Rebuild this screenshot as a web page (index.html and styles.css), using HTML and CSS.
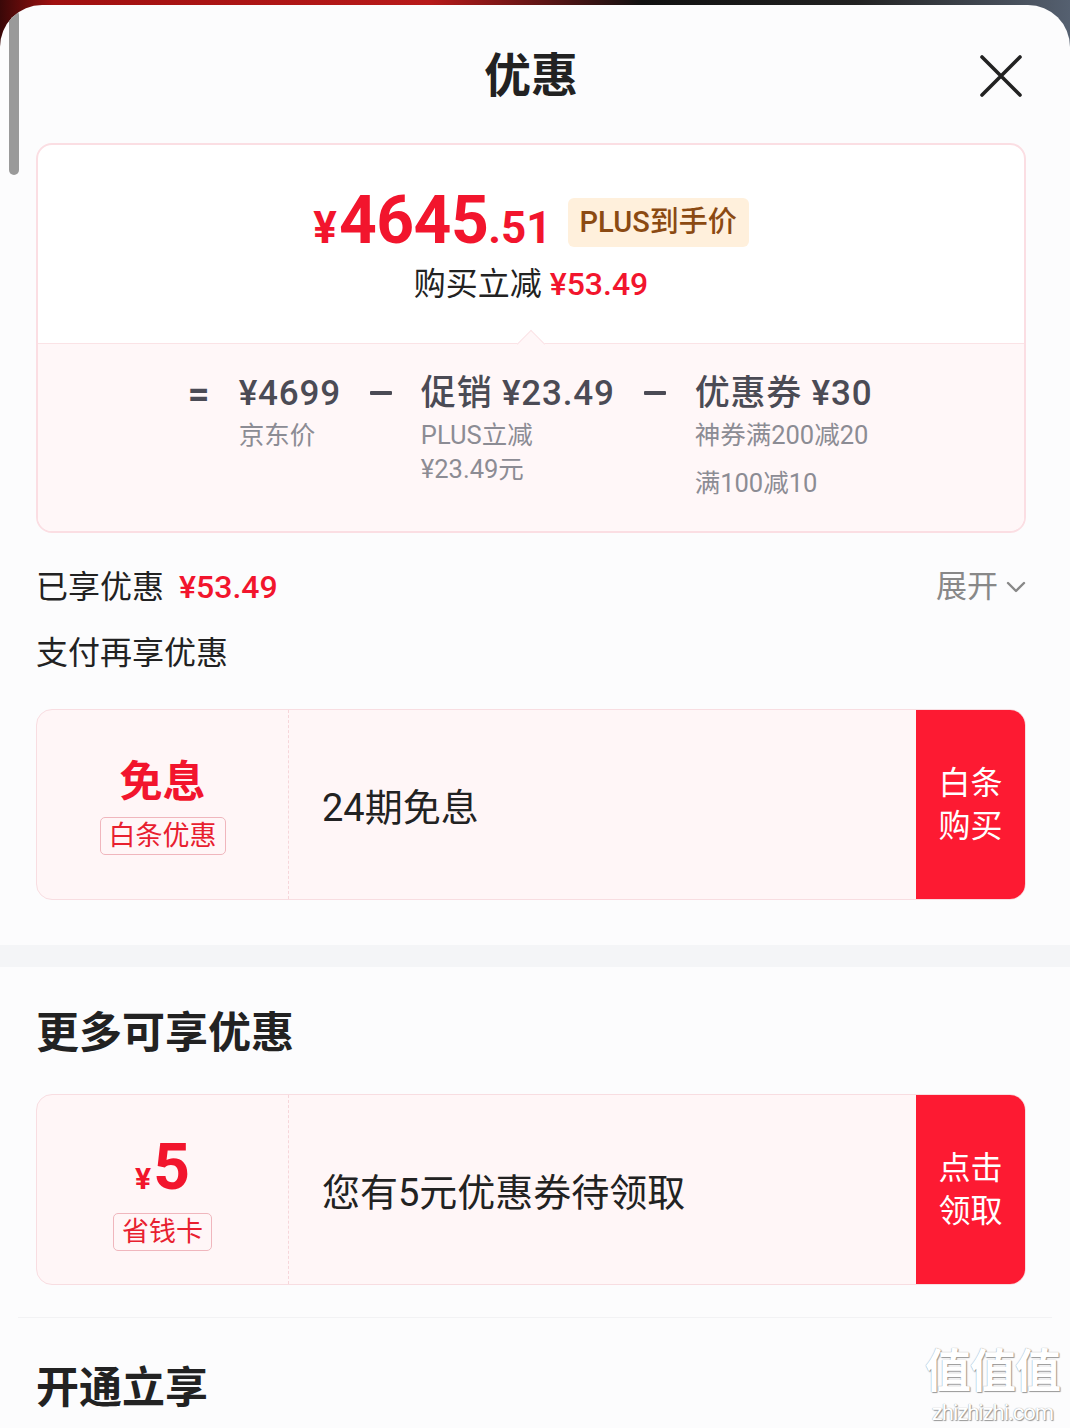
FILE: index.html
```html
<!DOCTYPE html>
<html lang="zh">
<head>
<meta charset="utf-8">
<link rel="stylesheet" href="styles.css">
</head>
<body>
<div class="sheet">
  <div class="scrollbar"></div>
  <div class="inner">
    <header class="head">
      <span></span>
      <h1 class="title">优惠</h1>
      <svg class="close" width="44" height="44" viewBox="0 0 44 44"><path d="M3 3 L41 41 M41 3 L3 41" stroke="#222" stroke-width="3.6" stroke-linecap="round" fill="none"/></svg>
    </header>

    <section class="price-card">
      <div class="pc-top">
        <div class="price-row">
          <span class="price"><span class="yen">¥</span><span class="int">4645</span><span class="dec">.51</span></span>
          <span class="plus-tag">PLUS到手价</span>
        </div>
        <div class="save-row">购买立减 <span class="red">¥53.49</span></div>
      </div>
      <div class="pc-bottom">
        <span class="notch"></span>
        <div class="formula">
          <span class="op">=</span>
          <div class="col">
            <div class="main">¥4699</div>
            <div class="sub sub-first">京东价</div>
          </div>
          <span class="minus"></span>
          <div class="col">
            <div class="main">促销 ¥23.49</div>
            <div class="sub sub-first">PLUS立减</div>
            <div class="sub">¥23.49元</div>
          </div>
          <span class="minus"></span>
          <div class="col">
            <div class="main">优惠券 ¥30</div>
            <div class="sub sub-first">神券满200减20</div>
            <div class="sub sub-gap">满100减10</div>
          </div>
        </div>
      </div>
    </section>

    <div class="enjoyed">
      <span>已享优惠<span class="red enjoyed-amt">¥53.49</span></span>
      <span class="expand">展开 <svg width="20" height="12" viewBox="0 0 20 12"><path d="M2 2 L10 10 L18 2" stroke="#888" stroke-width="2.4" fill="none" stroke-linecap="round" stroke-linejoin="round"/></svg></span>
    </div>
    <div class="pay-title">支付再享优惠</div>

    <div class="coupon">
      <div class="c-left c-left-free">
        <div class="c-big">免息</div>
        <div class="c-tag">白条优惠</div>
      </div>
      <div class="c-text">24期免息</div>
      <div class="c-btn">白条<br>购买</div>
    </div>
  </div>

  <div class="band"></div>

  <div class="inner">
    <h2 class="sec-title">更多可享优惠</h2>
    <div class="coupon">
      <div class="c-left c-left-money">
        <div class="c-money"><span class="c-yen">¥</span><span class="c-five">5</span></div>
        <div class="c-tag c-tag-money">省钱卡</div>
      </div>
      <div class="c-text">您有5元优惠券待领取</div>
      <div class="c-btn">点击<br>领取</div>
    </div>
    <div class="hairline"></div>
    <h2 class="sec-title sec-last">开通立享</h2>
  </div>

  <div class="watermark">
    <div class="wm-big">值值值</div>
    <div class="wm-small">zhizhizhi.com</div>
  </div>
</div>
</body>
</html>
```
FILE: styles.css
```css
* { box-sizing: border-box; margin: 0; padding: 0; }
html, body { width: 1070px; height: 1428px; overflow: hidden; }
body {
  font-family: Roboto, "Noto Sans CJK SC", sans-serif;
  background: linear-gradient(to right, #3a0808 0%, #a01010 5%, #b81a1a 40%, #111 60%, #222 80%, #556070 100%);
  color: #222;
}
.sheet {
  position: relative;
  margin-top: 5px;
  height: 1423px;
  background: #fcfcfd;
  border-radius: 42px 42px 0 0;
  overflow: hidden;
}
.scrollbar {
  position: absolute;
  left: 9px; top: 5px;
  width: 10px; height: 165px;
  border-radius: 5px;
  background: #9a9a9a;
}
.inner { padding: 0 44px 0 36px; }

.head {
  height: 138px;
  display: grid;
  grid-template-columns: 1fr auto 1fr;
  align-items: center;
  padding-top: 3px;
}
.title { font-size: 47px; font-weight: 700; color: #222; line-height: 1; }
.close { justify-self: end; margin-right: 3px; }

.price-card {
  border: 2px solid #fbdee3;
  border-radius: 16px;
  overflow: hidden;
  background: #fff;
}
.pc-top { padding: 44px 0 39px; text-align: center; }
.price-row { display: flex; justify-content: center; align-items: center; height: 64px; gap: 16px; }
.price { color: #f2152d; font-weight: 700; white-space: nowrap; line-height: 1; }
.yen { font-size: 44px; margin-right: 2px; }
.int { font-size: 66px; letter-spacing: -0.5px; }
.dec { font-size: 44px; }
.plus-tag {
  background: #fff0dc; color: #8b4a12;
  font-size: 29px; font-weight: 500;
  padding: 0 12px; height: 49px; line-height: 49px;
  border-radius: 6px; margin-top: 2px;
}
.save-row { margin-top: 11px; font-size: 32px; line-height: 40px; color: #222; }
.red { color: #f2152d; font-weight: 500; }

.pc-bottom {
  position: relative;
  background: #fff7f8;
  border-top: 1px solid #fbe3e6;
  padding: 30px 0 31px;
}
.notch {
  position: absolute;
  left: 50%; top: -10px;
  width: 20px; height: 20px;
  margin-left: -10px;
  background: #fff7f8;
  border-top: 1px solid #fbe3e6;
  border-left: 1px solid #fbe3e6;
  transform: rotate(45deg);
}
.formula { display: flex; justify-content: center; align-items: flex-start; gap: 29px; padding-right: 2px; }
.op { font-size: 38px; line-height: 40px; font-weight: 700; color: #4b4b55; width: 22px; text-align: center; }
.minus { width: 22px; height: 4px; margin-top: 17px; background: #4b4b55; border-radius: 1px; }
.col .main { font-size: 35px; line-height: 40px; font-weight: 500; color: #4b4b55; white-space: nowrap; letter-spacing: 0.8px; }
.col .sub { font-size: 25.5px; line-height: 34px; color: #8c8c94; white-space: nowrap; }
.col .sub-first { margin-top: 4px; }
.col .sub-gap { margin-top: 14px; }

.enjoyed {
  margin-top: 34px;
  display: flex; justify-content: space-between; align-items: center;
  font-size: 32px; line-height: 40px;
}
.enjoyed-amt { margin-left: 15px; }
.expand { color: #888; display: flex; align-items: center; gap: 8px; font-size: 31px; }
.pay-title { margin-top: 26px; font-size: 32px; line-height: 40px; }

.coupon {
  margin-top: 36px;
  height: 191px;
  display: flex;
  background: #fff6f7;
  border: 1px solid #f8dde1;
  border-radius: 16px;
  overflow: hidden;
}
.c-left {
  width: 252px;
  border-right: 1px dashed #f6d6da;
  display: flex; flex-direction: column; align-items: center; justify-content: center;
}
.c-left-free { padding-top: 4px; }
.c-big { font-size: 43px; font-weight: 700; color: #f2152d; line-height: 46px; }
.c-tag {
  margin-top: 12px;
  font-size: 27px; line-height: 36px; color: #e8202f;
  border: 1px solid #f0b6bd; border-radius: 5px;
  padding: 0 8px; background: #fff6f7;
}
.c-left-money { padding-top: 10px; }
.c-money { color: #f2152d; font-weight: 700; line-height: 60px; height: 60px; display: flex; align-items: baseline; }
.c-yen { font-size: 30px; margin-right: 2px; }
.c-five { font-size: 64px; }
.c-tag-money { margin-top: 15px; }
.c-text { flex: 1; display: flex; align-items: center; padding-left: 33px; font-size: 38px; color: #222; }
.c-btn {
  width: 109px;
  background: #fd1a32;
  color: #fff;
  font-size: 32px; line-height: 43px;
  display: flex; align-items: center; justify-content: center; text-align: center;
}

.band { margin-top: 45px; height: 22px; background: #f4f5f7; }
.sec-title { margin-top: 41px; font-size: 43px; font-weight: 700; line-height: 50px; color: #222; }
.hairline { margin: 32px -26px 0 -18px; height: 1px; background: #f2f2f4; }
.sec-last { margin-top: 45px; }

.watermark {
  position: absolute;
  right: 10px; bottom: 2px;
  text-align: center;
  color: #fff;
  text-shadow: 0 0 1px #888, 1px 1px 1px #999;
}
.wm-big { font-size: 46px; line-height: 50px; font-weight: 700; letter-spacing: -1px; }
.wm-small { font-size: 22px; line-height: 26px; letter-spacing: -1px; margin-top: 4px; }
```
